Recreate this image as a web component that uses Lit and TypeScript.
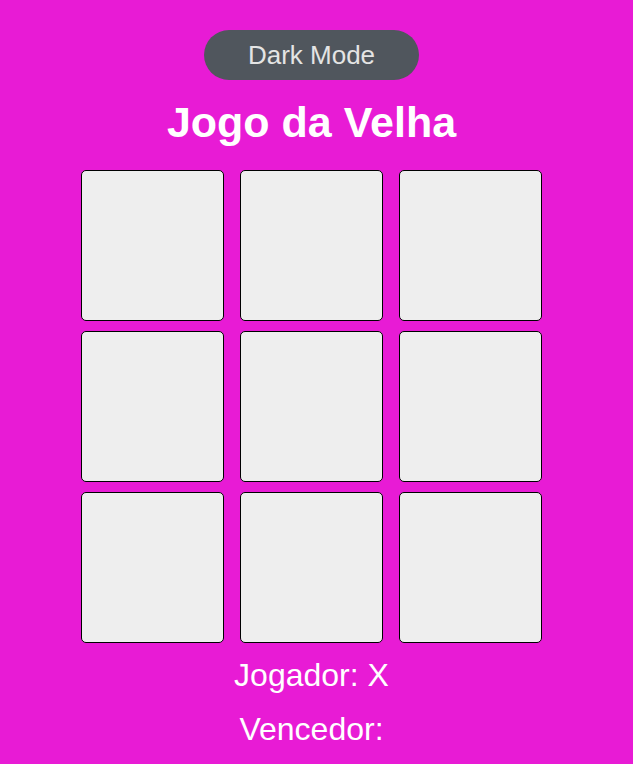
import { LitElement, html, css } from "lit";
import { customElement, state } from "lit/decorators.js";

const LINES = [
  [0, 1, 2], [3, 4, 5], [6, 7, 8],
  [0, 3, 6], [1, 4, 7], [2, 5, 8],
  [0, 4, 8], [2, 4, 6],
];

@customElement("app-root")
export class AppRoot extends LitElement {
  static styles = css`
    :host {
      display: block;
      box-sizing: border-box;
      min-height: 100vh;
      padding: 30px 10px 16px 0;
      background: #e81bd5;
      color: #fff;
      font-family: "Liberation Sans", Arial, sans-serif;
    }
    :host([dark]) {
      background: #222;
    }
    main {
      display: flex;
      flex-direction: column;
      align-items: center;
    }
    .mode {
      height: 50px;
      padding: 0 44px;
      border: 0;
      border-radius: 25px;
      background: #50565d;
      color: #e4e4e4;
      font: 26px "Liberation Sans", Arial, sans-serif;
      cursor: pointer;
    }
    h1 {
      margin: 18px 0 24px;
      font-size: 43px;
      line-height: 48px;
    }
    .board {
      display: grid;
      grid-template-columns: repeat(3, 1fr);
      gap: 10px 16px;
      box-sizing: border-box;
      width: 74%;
      max-width: 461px;
    }
    .cell {
      height: 151px;
      padding: 0;
      border: 1px solid #000;
      border-radius: 5px;
      background: #eee;
      color: #222;
      font: 80px "Liberation Sans", Arial, sans-serif;
      cursor: pointer;
    }
    .status {
      margin: 14px 0 0;
      font-size: 32px;
      line-height: 36px;
    }
    .status + .status {
      margin-top: 18px;
    }
  `;

  @state() private cells: string[] = Array(9).fill("");
  @state() private player = "X";
  @state() private winner = "";

  private play(i: number) {
    if (this.cells[i] || this.winner) return;
    const cells = [...this.cells];
    cells[i] = this.player;
    this.cells = cells;
    if (LINES.some((line) => line.every((n) => cells[n] === this.player))) {
      this.winner = this.player;
    } else {
      this.player = this.player === "X" ? "O" : "X";
    }
  }

  render() {
    return html`
      <main>
        <button class="mode" @click=${() => this.toggleAttribute("dark")}>Dark Mode</button>
        <h1>Jogo da Velha</h1>
        <div class="board">
          ${this.cells.map(
            (value, i) => html`<button
              class="cell"
              aria-label=${`Casa ${i + 1}`}
              @click=${() => this.play(i)}
            >${value}</button>`
          )}
        </div>
        <p class="status">Jogador: ${this.player}</p>
        <p class="status">Vencedor: ${this.winner}</p>
      </main>
    `;
  }
}
